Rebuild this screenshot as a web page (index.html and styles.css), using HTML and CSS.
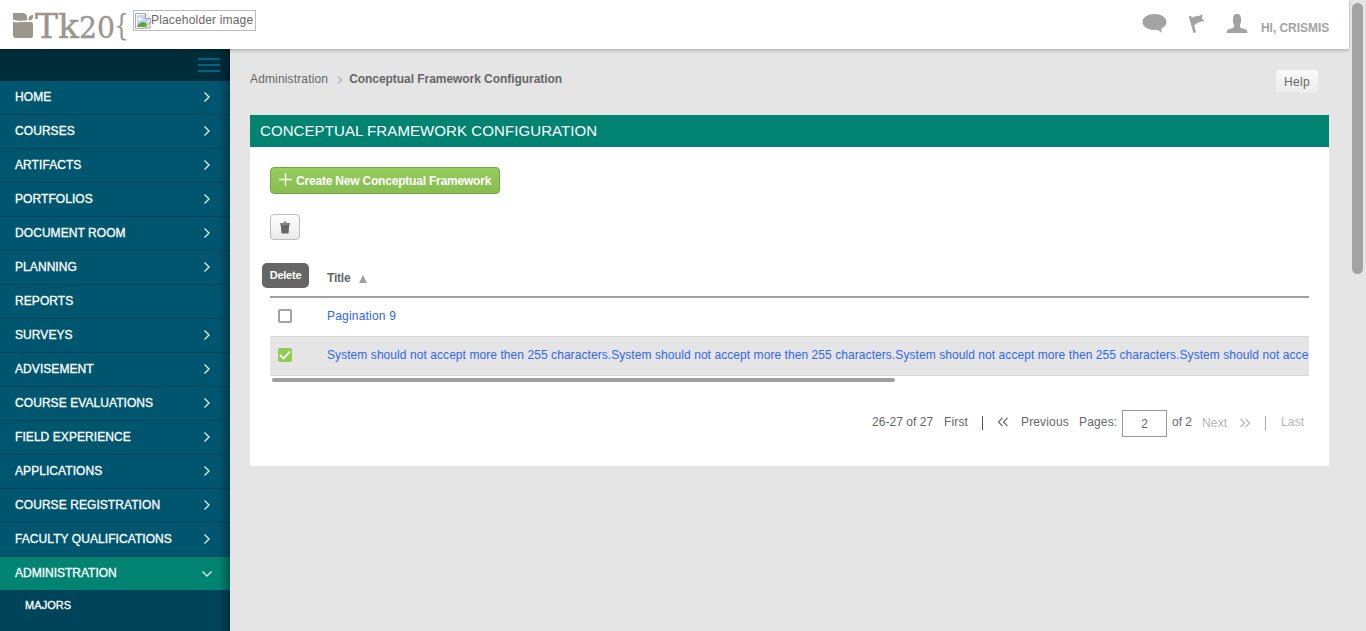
FILE: index.html
```
<!DOCTYPE html>
<html lang="en">
<head>
<meta charset="utf-8">
<title>Conceptual Framework Configuration</title>
<link rel="stylesheet" href="styles.css">
</head>
<body>
<svg class="defs" width="0" height="0"><defs>
<symbol id="chev" viewBox="0 0 10 12"><path d="M2.500 1.500 7 6l-4.500 4.500"/></symbol>
</defs></svg>
<header class="topbar">
  <svg class="logo" width="133" height="49" viewBox="0 0 133 49">
    <g fill="#9b968e"><path d="M13 13h10q4 .500 4 4v3.500h-4q-5 1-10-1zM28.500 20.500v-2q.5-3.500 4.500-3.500v2.500q-.5 3-4.500 3zM13 21.500q3 1.500 8 .5h10q2 0 2 2v12q0 2-2 2H16q-3 0-3-3z"/></g>
    <g class="logo-text"><text x="35" y="38" font-size="33.500" textLength="44" lengthAdjust="spacingAndGlyphs">Tk</text><text x="79" y="38" font-size="29" textLength="36" lengthAdjust="spacingAndGlyphs">20</text><text x="114" y="35" font-size="29" class="brace" textLength="15" lengthAdjust="spacingAndGlyphs">{</text></g>
  </svg>
  <div class="placeholder">
    <svg width="16" height="16" viewBox="0 0 16 16"><path d="M.5.5h10l5 5v4l-3 2-3 4h-9z" fill="#fff" stroke="#aaa"/><path d="M2 2h8v4h4v2l-4 5H2z" fill="#c2d5f6"/><path d="M3 6q1-3 3-1 2 0 1 2H3z" fill="#fff"/><path d="M2 14q2-5 6-5 3 0 4 2l-2 3z" fill="#59a934"/><path d="M10.500.5v5h5M15 9v6h-5z" fill="#fff" stroke="#999"/></svg><span>Placeholder image</span>
  </div>
  <div class="user">
    <svg class="i-chat" width="26" height="22" viewBox="0 0 26 22"><path d="M12.500 1C19 1 24.500 4.400 24.500 9c0 3-2 5-5 6.500V20q-2-3-5-3.200C6 17.500.5 13.500.5 9S6 1 12.500 1z"/></svg>
    <svg class="i-flag" width="18" height="22" viewBox="0 0 18 22"><path d="M.8 3.500l2.400-.8.500 2C8 2 10 4.500 14.500 1l-.5 4.500 2.700 2.700C12.500 8 10 9 6.200 12.500l1.900 6.800-2.700.7z"/></svg>
    <svg class="i-user" width="22" height="22" viewBox="0 0 22 22"><path d="M11 1c3 0 4.200 2 4 5.500C15.300 9 14.800 10 14 11.500v3l6 2q1.500.5 1.500 3.500H.5q0-3 1.500-3.500l6-2v-3C7.200 10 6.700 9 7 6.500 6.800 3 8 1 11 1z"/></svg>
    <span>HI, CRISMIS</span>
  </div>
</header>
<div class="layout">
  <nav class="sidebar">
    <div class="burger"><i></i><i></i><i></i></div>
    <a>HOME<svg><use href="#chev"/></svg></a>
    <a>COURSES<svg><use href="#chev"/></svg></a>
    <a>ARTIFACTS<svg><use href="#chev"/></svg></a>
    <a>PORTFOLIOS<svg><use href="#chev"/></svg></a>
    <a>DOCUMENT ROOM<svg><use href="#chev"/></svg></a>
    <a>PLANNING<svg><use href="#chev"/></svg></a>
    <a>REPORTS</a>
    <a>SURVEYS<svg><use href="#chev"/></svg></a>
    <a>ADVISEMENT<svg><use href="#chev"/></svg></a>
    <a>COURSE EVALUATIONS<svg><use href="#chev"/></svg></a>
    <a>FIELD EXPERIENCE<svg><use href="#chev"/></svg></a>
    <a>APPLICATIONS<svg><use href="#chev"/></svg></a>
    <a>COURSE REGISTRATION<svg><use href="#chev"/></svg></a>
    <a>FACULTY QUALIFICATIONS<svg><use href="#chev"/></svg></a>
    <a class="active">ADMINISTRATION<svg class="down"><use href="#chev"/></svg></a>
    <a class="sub">MAJORS</a>
  </nav>
  <main class="content">
    <div class="crumbs">
      <span>Administration</span>
      <svg width="6" height="10" viewBox="0 0 6 10"><path d="M1 1.500 4.500 5 1 8.500"/></svg>
      <b>Conceptual Framework Configuration</b>
      <button class="help">Help</button>
    </div>
    <section class="panel">
      <h1>CONCEPTUAL FRAMEWORK CONFIGURATION</h1>
      <div class="body">
        <button class="create"><svg width="13" height="13" viewBox="0 0 13 13"><path d="M6.500 0v13M0 6.500h13"/></svg><span>Create New Conceptual Framework</span></button>
        <div class="tools">
          <button class="trash"><svg width="12" height="13" viewBox="0 0 12 13"><path d="M1 2h3.500V.5h3V2H11v2H1z" fill="#888"/><path d="M1.700 4h8.600l-.8 8.500h-7z" fill="#666"/></svg></button>
          <div class="tip">Delete</div>
        </div>
        <div class="table">
          <div class="row head"><span>Title</span><svg width="8" height="8" viewBox="0 0 8 8"><path d="M4 0l4 8H0z"/></svg></div>
          <div class="row"><i class="check"></i><a>Pagination 9</a></div>
          <div class="row selected"><i class="check on"><svg width="14" height="14" viewBox="0 0 14 14"><path d="M2 7l3.500 3.500L12 3.500"/></svg></i><a class="long">System should not accept more then 255 characters.System should not accept more then 255 characters.System should not accept more then 255 characters.System should not accept more then 255 characters.</a></div>
          <div class="hscroll"></div>
        </div>
        <div class="pager">
          <span class="count">26-27 of 27</span><span class="first">First</span><i class="sep"></i>
          <svg class="dbl" width="12" height="10" viewBox="0 0 12 10"><path d="M5.500.8 1.500 5l4 4.200M10.500.8l-4 4.200 4 4.200"/></svg>
          <span class="prev">Previous</span><span class="pages">Pages:</span><input value="2" aria-label="Page"><span class="of">of 2</span>
          <span class="next off">Next</span>
          <svg class="dbl right off" width="12" height="10" viewBox="0 0 12 10"><path d="M1.500.8l4 4.200-4 4.200M6.500.8l4 4.200-4 4.200"/></svg>
          <i class="sep light"></i><span class="last off">Last</span>
        </div>
      </div>
    </section>
  </main>
</div>
<div class="vtrack"><i></i></div>
</body>
</html>
```
FILE: styles.css
```
* { box-sizing: border-box; }
body { margin: 0; height: 631px; overflow: hidden; background: #e5e5e5; color: #666; font: 12px/16px "Liberation Sans", Arial, sans-serif; }
button, input { font: inherit; color: inherit; margin: 0; padding: 0; }
.defs { position: absolute; }
.topbar { position: relative; z-index: 2; display: flex; width: 1349px; height: 49px; background: #fff; box-shadow: 0 1px 4px rgba(0,0,0,.3); }
.logo { display: block; }
.logo-text { fill: #9b968e; stroke: #9b968e; stroke-width: .4; font-family: "DejaVu Serif", serif; }
.brace { stroke: none; }
.placeholder { display: flex; width: 123px; height: 21px; margin-top: 10px; padding: 1px; border: 1px solid #bbb; white-space: nowrap; letter-spacing: .17px; }
.placeholder svg { flex: none; margin-top: 1px; }
.user { display: flex; margin-left: auto; padding: 13px 20px 0 0; color: #a3a3a3; fill: #a3a3a3; font-weight: bold; }
.i-chat { margin-right: 20px; }
.i-flag { margin-right: 20px; }
.i-user { margin-right: 13px; }
.user span { margin-top: 7px; width: 68px; white-space: nowrap; letter-spacing: -.05px; }
.layout { display: flex; height: 582px; }
.sidebar { position: relative; z-index: 1; width: 230px; height: 582px; background: #00445a; color: #fff; flex: none; }
.sidebar::after { content: ""; position: absolute; top: 0; right: 0; bottom: 0; width: 11px; background: linear-gradient(to right, transparent, rgba(0,0,0,.3)); }
.burger { height: 32px; padding: 9px 10px 0 198px; background: #002d3a; }
.burger i { display: block; height: 2px; margin-bottom: 4px; background: #006484; }
.sidebar a { display: flex; justify-content: space-between; height: 34px; padding: 8px 18px 0 15px; background: #00566f; border-bottom: 1px solid #00445a; letter-spacing: .07px; -webkit-text-stroke: .3px #fff; }
.sidebar svg { width: 10px; height: 12px; margin-top: 2px; fill: none; stroke: #d9e9ed; stroke-width: 1.4; }
.sidebar .active { height: 33px; background: #008370; border: 0; letter-spacing: 0; }
.sidebar .down { transform: rotate(90deg); margin-top: 3px; }
.sidebar .sub { padding: 7px 0 0 25px; background: #00445a; border: 0; font-size: 11px; }
.content { flex: 1; min-width: 0; padding: 0 37px 0 20px; }
.crumbs { display: flex; height: 66px; padding-top: 22px; letter-spacing: .15px; }
.crumbs svg { margin: 4px 6px 0 9px; fill: none; stroke: #888; }
.crumbs b { letter-spacing: -.05px; }
.help { width: 42px; height: 23px; margin: -1px 11px 0 auto; border: 0; border-radius: 4px; background: linear-gradient(#fafafa, #ebebeb); letter-spacing: .3px; }
.panel { height: 351px; background: #fff; }
.panel h1 { height: 32px; margin: 0; padding-left: 10px; background: #008370; color: #fff; font-size: 15px; font-weight: normal; line-height: 32px; letter-spacing: .09px; }
.body { padding: 20px 20px 0; }
.create { display: flex; width: 230px; height: 27px; padding: 5px 0 0 8px; border: 1px solid #75a843; border-radius: 4px; background: linear-gradient(#96cd5b, #88bd52); color: #fff; font-weight: bold; white-space: nowrap; letter-spacing: -.2px; }
.create svg { margin: 0 4px 0 0; stroke: #fff; stroke-width: 1.4; }
.tools { position: relative; height: 46px; padding-top: 20px; }
.trash { display: flex; width: 30px; height: 26px; justify-content: center; align-items: center; border: 1px solid #bbb; border-radius: 4px; background: linear-gradient(#fff, #eaeaea); }
.tip { position: absolute; left: -8px; top: 69px; width: 47px; height: 25px; border-radius: 5px; background: #666; color: #fff; font-size: 11px; font-weight: bold; line-height: 24px; text-align: center; letter-spacing: -.25px; }
.table { height: 143px; margin-top: 15px; overflow: hidden; }
.row { display: flex; height: 38px; padding: 10px 0 0 8px; letter-spacing: .2px; }
.head { height: 43px; padding: 15px 0 0 57px; border-bottom: 2px solid #9f9f9f; font-weight: bold; letter-spacing: -.2px; }
.head svg { margin: 5px 0 0 9px; fill: #a0a0a0; }
.row a { color: #2f66ef; white-space: nowrap; }
.row .long { letter-spacing: .067px; }
.check { display: flex; flex: none; width: 14px; height: 14px; margin: 1px 35px 0 0; border: 2px solid #a3a3a3; border-radius: 2px; background: #fff; }
.selected { height: 40px; background: #e5e5e5; border: solid #d9d9d9; border-width: 1px 0; overflow: hidden; }
.on { border: 0; background: #92cb58; }
.on svg { fill: none; stroke: #fff; stroke-width: 1.8; }
.hscroll { width: 623px; height: 4px; margin: 2px 0 0 2px; border-radius: 2px; background: #9f9f9f; }
.pager { display: flex; height: 30px; padding-left: 602px; margin-top: 12px; white-space: nowrap; letter-spacing: .15px; }
.pager span { flex: none; padding-top: 4px; }
.count { width: 72px; letter-spacing: .05px; }
.first { width: 38px; }
.sep { width: 1px; height: 14px; margin: 6px 14px 0 0; background: #555; flex: none; }
.dbl { margin: 7px 12px 0 0; fill: none; stroke: #666; stroke-width: 1.2; flex: none; }
.prev { width: 58px; }
.pages { width: 43px; }
.pager input { width: 45px; height: 27px; border: 1px solid #999; background: #fff; text-align: center; flex: none; }
.of { width: 35px; padding-left: 5px; letter-spacing: 0; }
.pager .next { width: 37px; padding-top: 5px; }
.pager .off { color: #b5b5b5; stroke: #b5b5b5; }
.pager span.off { stroke: none; }
.pager .right { margin: 8px 14px 0 0; }
.pager .light { margin-right: 15px; background: #aaa; }
.vtrack { position: absolute; z-index: 3; top: 0; left: 1350px; width: 16px; height: 631px; background: #e5e5e5; }
.vtrack i { display: block; width: 11px; height: 271px; margin: 3px 0 0 2px; border-radius: 6px; background: #a3a3a3; }
```
